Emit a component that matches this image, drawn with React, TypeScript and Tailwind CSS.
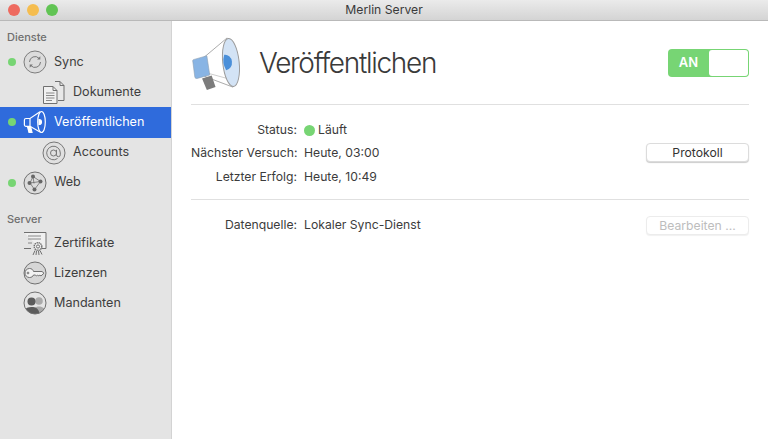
import React from "react";

const font = { fontFamily: "Inter, 'Liberation Sans', sans-serif" };

function SyncIcon() {
  return (
    <svg viewBox="0 0 24 24" className="h-[24px] w-[24px]" fill="none">
      <circle cx="12" cy="12" r="11" fill="#dcdcdc" stroke="#7d7d7d" strokeWidth="1" />
      <path d="M6.500 12a5.500 5.500 0 0 1 9.600-3.600" stroke="#777" strokeWidth="1" />
      <path d="M17.500 12a5.500 5.500 0 0 1-9.600 3.600" stroke="#777" strokeWidth="1" />
      <path d="M17.300 6.200v3.200h-3.200z" fill="#777" />
      <path d="M6.700 17.800v-3.200h3.200z" fill="#777" />
    </svg>
  );
}

function DocsIcon() {
  return (
    <svg viewBox="0 0 24 24" className="h-[24px] w-[24px]" fill="none" stroke="#707070" strokeWidth="1">
      <path d="M13 1.500h5l4 4v15h-6" fill="#e8e8e8" />
      <path d="M18 1.500v4h4" />
      <path d="M1.500 6.500h9.500l4 4v13H1.500z" fill="#f1f1f1" />
      <path d="M11 6.500v4h4" />
      <path d="M4 13h8.500M4 15.500h8.500M4 18h8.500M4 20.500h6" strokeWidth="0.8" />
    </svg>
  );
}

function MegaphoneIcon({ color }: { color: string }) {
  return (
    <svg viewBox="0 0 24 24" className="h-[24px] w-[24px]" fill="none" stroke={color} strokeWidth="1.2">
      <ellipse cx="18.500" cy="12" rx="3.800" ry="10.500" />
      <path d="M17 1.800 7 8.500H3a1.600 1.600 0 0 0-1.600 1.600v4.600A1.600 1.600 0 0 0 3 16.300h4l10 5.800" />
      <path d="M7 8.500v7.800" />
      <path d="M4.500 16.500 6 22.500h3l-1.500-6" fill={color} />
      <path d="M16 9.500a2.500 2.500 0 0 1 0 5z" fill={color} />
    </svg>
  );
}

function AtIcon() {
  return (
    <svg viewBox="0 0 24 24" className="h-[24px] w-[24px]" fill="none" stroke="#777" strokeWidth="1">
      <circle cx="12" cy="12" r="11" fill="#e0e0e0" />
      <circle cx="11.500" cy="12" r="3" />
      <path d="M14.500 8.800v5a1.900 1.900 0 0 0 3.800 0V12a6.800 6.800 0 1 0-2.800 5.500" />
    </svg>
  );
}

function WebIcon() {
  return (
    <svg viewBox="0 0 24 24" className="h-[24px] w-[24px]" fill="none" stroke="#707070" strokeWidth="1">
      <circle cx="12" cy="12" r="11" fill="#dcdcdc" />
      <path d="M10 5.500 17.500 10.500 7 12 10 5.500M7 12l4.500 6.500M17.500 10.500l-6 8M10 5.500l1 7" strokeWidth="0.8" />
      <circle cx="10" cy="5.500" r="2" fill="#666" stroke="none" />
      <circle cx="17.500" cy="10.500" r="2" fill="#666" stroke="none" />
      <circle cx="6.500" cy="12" r="2" fill="#666" stroke="none" />
      <circle cx="11.500" cy="18.500" r="2" fill="#666" stroke="none" />
    </svg>
  );
}

function CertIcon() {
  return (
    <svg viewBox="0 0 24 24" className="h-[24px] w-[24px]" fill="none" stroke="#707070" strokeWidth="1">
      <path d="M1 1.500h22v16h-6M8 17.500H1z" fill="#f0f0f0" />
      <path d="M5 5h13M5 8h13M5 12h4" strokeWidth="0.8" />
      <path d="M12 19.500 10 24M13.500 20l-.5 4M15.500 20l.5 4M17 19.500l2 4" />
      <circle cx="15" cy="15.500" r="3.800" fill="#f0f0f0" strokeDasharray="1.400 0.600" strokeWidth="1.400" />
      <circle cx="15" cy="15.500" r="1.600" />
    </svg>
  );
}

function KeyIcon() {
  return (
    <svg viewBox="0 0 24 24" className="h-[24px] w-[24px]" fill="none" stroke="#707070" strokeWidth="1">
      <circle cx="12" cy="12" r="11" fill="#d6d6d6" />
      <path d="M6.500 7.500a4.500 4.500 0 0 0 0 9c2 0 3.500-1 4-2.500h2l1 1 1.200-1 1 1 1.200-1 1 1 3.100-2.800-2-1.700H10.500C10 8.500 8.500 7.500 6.500 7.500z" fill="#f2f2f2" />
      <circle cx="5" cy="12" r="0.900" />
    </svg>
  );
}

function PeopleIcon() {
  return (
    <svg viewBox="0 0 24 24" className="h-[24px] w-[24px]">
      <defs>
        <clipPath id="c">
          <circle cx="12" cy="12" r="11" />
        </clipPath>
      </defs>
      <circle cx="12" cy="12" r="11" fill="#e4e4e4" />
      <g clipPath="url(#c)">
        <circle cx="16" cy="10" r="3.800" fill="#a9a9a9" />
        <path d="M9 24c0-6 3-8.500 7-8.500s7 2.500 7 8.500z" fill="#a9a9a9" />
        <circle cx="8.500" cy="10.500" r="4" fill="#5c5c5c" />
        <path d="M0 24c0-6 4-8 8.500-8s8 2 8 8z" fill="#5c5c5c" />
      </g>
      <circle cx="12" cy="12" r="11" fill="none" stroke="#707070" strokeWidth="1" />
    </svg>
  );
}

function BigMegaphone() {
  return (
    <svg viewBox="0 0 50 56" className="ml-[1px] h-[54px] w-[49px]">
      <path d="M36 2 11 23l2 19 29 11z" fill="#fff" stroke="#a8a8a8" strokeWidth="1" />
      <path d="M14 38 36 44" stroke="#ccc" strokeWidth="1" fill="none" />
      <ellipse cx="40" cy="27.500" rx="8.500" ry="25" transform="rotate(-6 40 27.500)" fill="#d3e3f5" stroke="#9a9a9a" strokeWidth="1" />
      <path d="M33 19.500a7 8 0 0 1 2 16 20 20 0 0 1-2-16z" fill="#4a8fd9" />
      <path d="M1 24.500 15 20.500l3 20-13 3.500a2 2 0 0 1-2.500-1.500L0.500 27a2 2 0 0 1 .5-2.500z" fill="#88b4e4" stroke="#8c9db0" strokeWidth="0.6" />
      <path d="M10 44l10-3 4 12-9 3z" fill="#7c7c7c" />
    </svg>
  );
}

function NavRow({ label, icon, dot, indent, active }: any) {
  return (
    <div className={`flex h-[30.2px] items-center pl-[8px] ${active ? "bg-[#2f6bdc] text-white" : "text-[#3e3e3e]"}`}>
      <span className="block w-[8px] shrink-0">
        {dot && <span className="block h-[8px] w-[8px] rounded-full bg-[#77d574]" />}
      </span>
      <span className={`flex items-center gap-[7px] ${indent ? "ml-[26px]" : "ml-[7px]"}`}>
        {icon}
        <span className="text-[12.6px]">{label}</span>
      </span>
    </div>
  );
}

function Field({ label, children }: any) {
  return (
    <div className="flex h-[18px] items-center">
      <span className="w-[106px] whitespace-nowrap text-right text-[#3c3c3c]">{label}</span>
      <span className="ml-[7px] flex items-center gap-[3px] text-[#3c3c3c]">{children}</span>
    </div>
  );
}

export default function App() {
  return (
    <div className="flex h-[439px] w-[768px] flex-col overflow-hidden bg-white" style={font}>
      <header className="relative flex h-[21px] shrink-0 items-center justify-center border-b border-[#b9b9b9] bg-gradient-to-b from-[#ebebeb] to-[#d4d4d4]">
        <div className="absolute left-[8px] top-[4px] flex gap-[7px]">
          <span className="h-[12px] w-[12px] rounded-full bg-[#ee6a5f]" />
          <span className="h-[12px] w-[12px] rounded-full bg-[#f5bd4f]" />
          <span className="h-[12px] w-[12px] rounded-full bg-[#61c454]" />
        </div>
        <span className="text-[12.2px] text-[#3a3a3a]">Merlin Server</span>
      </header>

      <div className="flex flex-1">
        <aside className="w-[172px] shrink-0 border-r border-[#d3d3d3] bg-[#e4e4e4] pt-[9px]">
          <div className="h-[15px] pl-[7px] text-[11px] font-medium leading-[15px] text-[#6f6f6f]">Dienste</div>
          <div className="mt-[2px]">
            <NavRow label="Sync" icon={<SyncIcon />} dot />
            <NavRow label="Dokumente" icon={<DocsIcon />} indent />
            <NavRow label="Veröffentlichen" icon={<MegaphoneIcon color="#fff" />} dot active />
            <NavRow label="Accounts" icon={<AtIcon />} indent />
            <NavRow label="Web" icon={<WebIcon />} dot />
          </div>
          <div className="mt-[14px] h-[15px] pl-[7px] text-[11px] font-medium leading-[15px] text-[#6f6f6f]">Server</div>
          <div className="mt-[1px]">
            <NavRow label="Zertifikate" icon={<CertIcon />} />
            <NavRow label="Lizenzen" icon={<KeyIcon />} />
            <NavRow label="Mandanten" icon={<PeopleIcon />} />
          </div>
        </aside>

        <main className="flex-1 pl-[19px] pr-[19px] text-[12.2px]">
          <div className="flex h-[84px] items-center border-b border-[#e0e0e0]">
            <BigMegaphone />
            <h1 className="ml-[18px] text-[28px] font-light tracking-[-1.3px] text-[#3a3a3a]">
              Veröffentlichen
            </h1>
            <div className="ml-auto flex h-[28px] w-[81px] overflow-hidden rounded-[4px] bg-[#77d574]">
              <span className="flex w-[41px] items-center justify-center text-[13px] font-semibold text-white">AN</span>
              <span className="m-[1px] ml-0 flex-1 rounded-[3px] bg-white" />
            </div>
          </div>

          <div className="flex items-start border-b border-[#e0e0e0] pb-[13px] pt-[16px]">
            <div className="flex flex-1 flex-col gap-[5.5px]">
              <Field label="Status:">
                <span className="block h-[11px] w-[11px] rounded-full bg-[#77d574]" />
                Läuft
              </Field>
              <Field label="Nächster Versuch:">Heute, 03:00</Field>
              <Field label="Letzter Erfolg:">Heute, 10:49</Field>
            </div>
            <button className="mt-[22px] h-[19px] w-[103px] rounded-[4px] border border-[#dcdcdc] bg-white text-[12.2px] text-[#333] shadow-[0_1px_1px_rgba(0,0,0,0.2)]">
              Protokoll
            </button>
          </div>

          <div className="flex items-center pt-[16px]">
            <div className="flex-1">
              <Field label="Datenquelle:">Lokaler Sync-Dienst</Field>
            </div>
            <button className="h-[19px] w-[103px] rounded-[4px] border border-[#ececec] bg-white text-[12.2px] text-[#bdbdbd] shadow-[0_1px_1px_rgba(0,0,0,0.06)]">
              Bearbeiten ...
            </button>
          </div>
        </main>
      </div>
    </div>
  );
}
